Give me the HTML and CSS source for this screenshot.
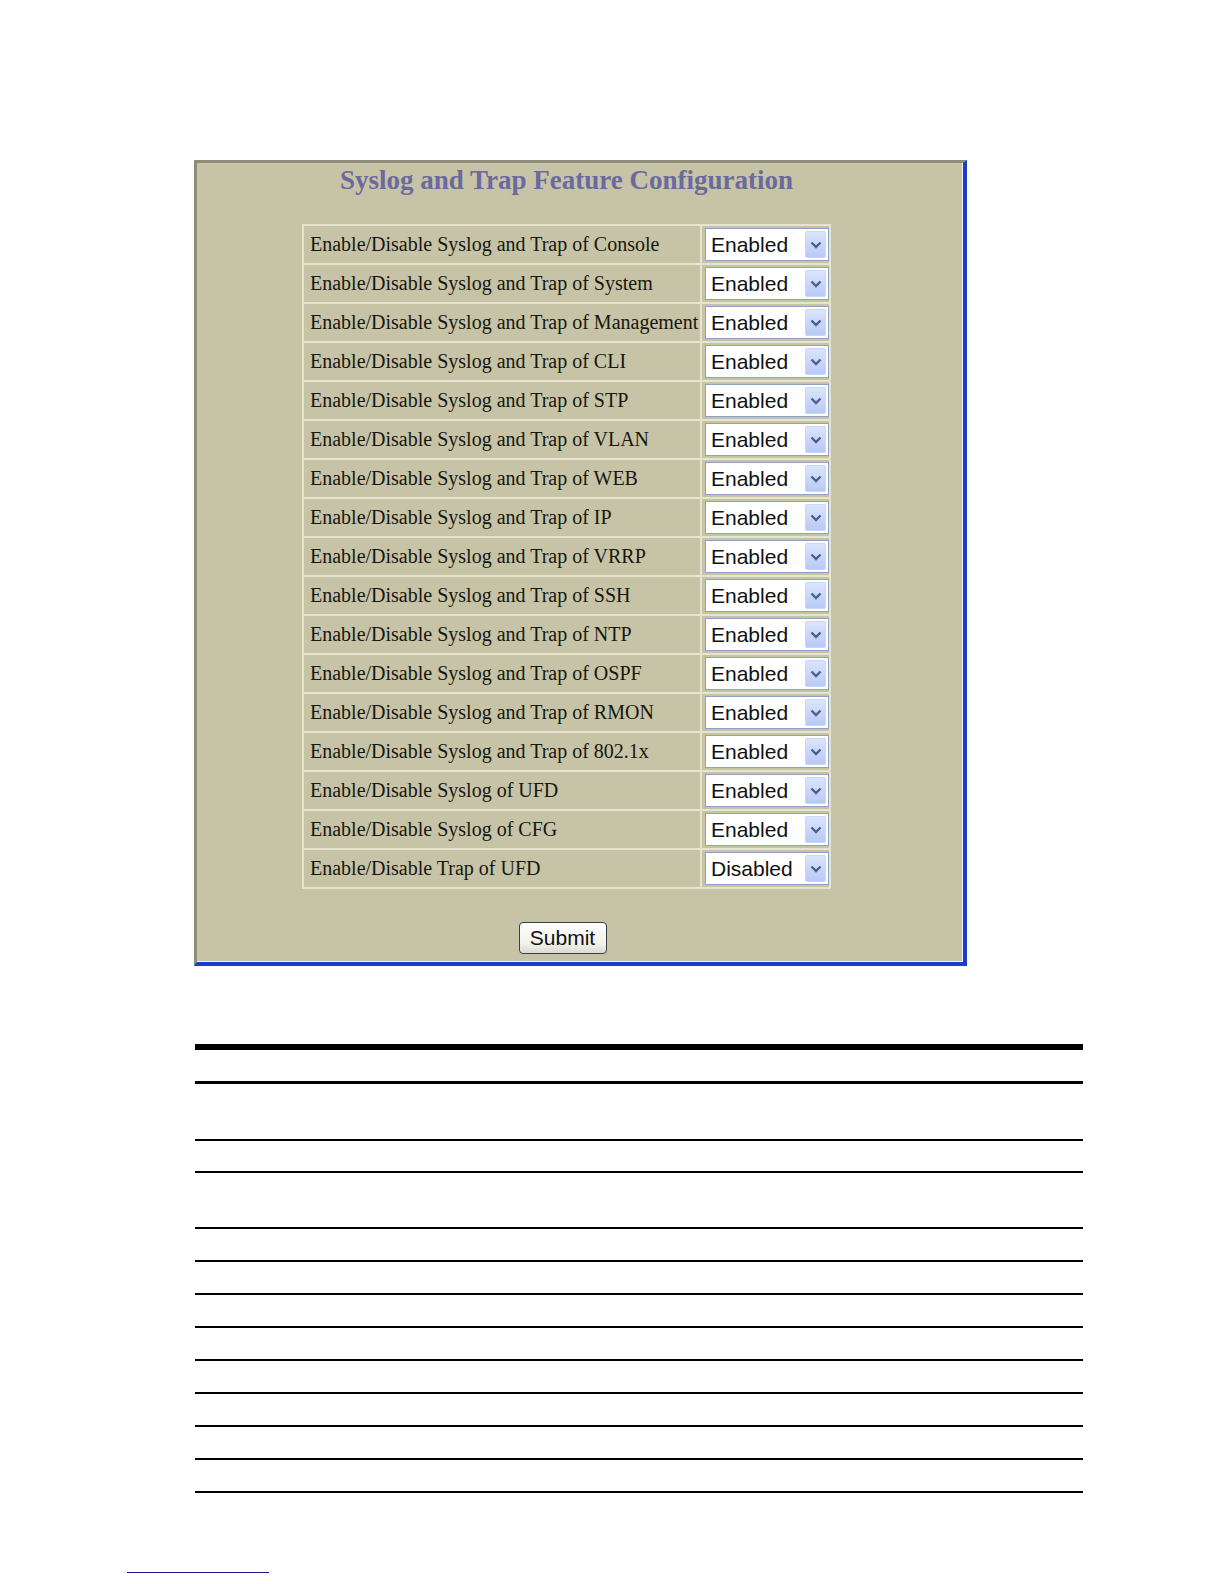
FILE: index.html
```html
<!DOCTYPE html>
<html>
<head>
<meta charset="utf-8">
<title>Syslog and Trap Feature Configuration</title>
<link rel="stylesheet" href="styles.css">
</head>
<body>
<div class="page">
  <div class="panel">
    <div class="panel-inner">
      <h1 class="title">Syslog and Trap Feature Configuration</h1>
      <table class="cfg">
        <tbody>
          <tr><td class="lbl">Enable/Disable Syslog and Trap of Console</td><td class="val"><div class="sel"><span class="sel-text">Enabled</span><span class="sel-btn"><svg viewBox="0 0 12 8" width="12" height="8"><path d="M1.5 1.5 L6 6 L10.5 1.5" fill="none" stroke="#4b5f8c" stroke-width="2.4"/></svg></span></div></td></tr>
          <tr><td class="lbl">Enable/Disable Syslog and Trap of System</td><td class="val"><div class="sel"><span class="sel-text">Enabled</span><span class="sel-btn"><svg viewBox="0 0 12 8" width="12" height="8"><path d="M1.5 1.5 L6 6 L10.5 1.5" fill="none" stroke="#4b5f8c" stroke-width="2.4"/></svg></span></div></td></tr>
          <tr><td class="lbl">Enable/Disable Syslog and Trap of Management</td><td class="val"><div class="sel"><span class="sel-text">Enabled</span><span class="sel-btn"><svg viewBox="0 0 12 8" width="12" height="8"><path d="M1.5 1.5 L6 6 L10.5 1.5" fill="none" stroke="#4b5f8c" stroke-width="2.4"/></svg></span></div></td></tr>
          <tr><td class="lbl">Enable/Disable Syslog and Trap of CLI</td><td class="val"><div class="sel"><span class="sel-text">Enabled</span><span class="sel-btn"><svg viewBox="0 0 12 8" width="12" height="8"><path d="M1.5 1.5 L6 6 L10.5 1.5" fill="none" stroke="#4b5f8c" stroke-width="2.4"/></svg></span></div></td></tr>
          <tr><td class="lbl">Enable/Disable Syslog and Trap of STP</td><td class="val"><div class="sel"><span class="sel-text">Enabled</span><span class="sel-btn"><svg viewBox="0 0 12 8" width="12" height="8"><path d="M1.5 1.5 L6 6 L10.5 1.5" fill="none" stroke="#4b5f8c" stroke-width="2.4"/></svg></span></div></td></tr>
          <tr><td class="lbl">Enable/Disable Syslog and Trap of VLAN</td><td class="val"><div class="sel"><span class="sel-text">Enabled</span><span class="sel-btn"><svg viewBox="0 0 12 8" width="12" height="8"><path d="M1.5 1.5 L6 6 L10.5 1.5" fill="none" stroke="#4b5f8c" stroke-width="2.4"/></svg></span></div></td></tr>
          <tr><td class="lbl">Enable/Disable Syslog and Trap of WEB</td><td class="val"><div class="sel"><span class="sel-text">Enabled</span><span class="sel-btn"><svg viewBox="0 0 12 8" width="12" height="8"><path d="M1.5 1.5 L6 6 L10.5 1.5" fill="none" stroke="#4b5f8c" stroke-width="2.4"/></svg></span></div></td></tr>
          <tr><td class="lbl">Enable/Disable Syslog and Trap of IP</td><td class="val"><div class="sel"><span class="sel-text">Enabled</span><span class="sel-btn"><svg viewBox="0 0 12 8" width="12" height="8"><path d="M1.5 1.5 L6 6 L10.5 1.5" fill="none" stroke="#4b5f8c" stroke-width="2.4"/></svg></span></div></td></tr>
          <tr><td class="lbl">Enable/Disable Syslog and Trap of VRRP</td><td class="val"><div class="sel"><span class="sel-text">Enabled</span><span class="sel-btn"><svg viewBox="0 0 12 8" width="12" height="8"><path d="M1.5 1.5 L6 6 L10.5 1.5" fill="none" stroke="#4b5f8c" stroke-width="2.4"/></svg></span></div></td></tr>
          <tr><td class="lbl">Enable/Disable Syslog and Trap of SSH</td><td class="val"><div class="sel"><span class="sel-text">Enabled</span><span class="sel-btn"><svg viewBox="0 0 12 8" width="12" height="8"><path d="M1.5 1.5 L6 6 L10.5 1.5" fill="none" stroke="#4b5f8c" stroke-width="2.4"/></svg></span></div></td></tr>
          <tr><td class="lbl">Enable/Disable Syslog and Trap of NTP</td><td class="val"><div class="sel"><span class="sel-text">Enabled</span><span class="sel-btn"><svg viewBox="0 0 12 8" width="12" height="8"><path d="M1.5 1.5 L6 6 L10.5 1.5" fill="none" stroke="#4b5f8c" stroke-width="2.4"/></svg></span></div></td></tr>
          <tr><td class="lbl">Enable/Disable Syslog and Trap of OSPF</td><td class="val"><div class="sel"><span class="sel-text">Enabled</span><span class="sel-btn"><svg viewBox="0 0 12 8" width="12" height="8"><path d="M1.5 1.5 L6 6 L10.5 1.5" fill="none" stroke="#4b5f8c" stroke-width="2.4"/></svg></span></div></td></tr>
          <tr><td class="lbl">Enable/Disable Syslog and Trap of RMON</td><td class="val"><div class="sel"><span class="sel-text">Enabled</span><span class="sel-btn"><svg viewBox="0 0 12 8" width="12" height="8"><path d="M1.5 1.5 L6 6 L10.5 1.5" fill="none" stroke="#4b5f8c" stroke-width="2.4"/></svg></span></div></td></tr>
          <tr><td class="lbl">Enable/Disable Syslog and Trap of 802.1x</td><td class="val"><div class="sel"><span class="sel-text">Enabled</span><span class="sel-btn"><svg viewBox="0 0 12 8" width="12" height="8"><path d="M1.5 1.5 L6 6 L10.5 1.5" fill="none" stroke="#4b5f8c" stroke-width="2.4"/></svg></span></div></td></tr>
          <tr><td class="lbl">Enable/Disable Syslog of UFD</td><td class="val"><div class="sel"><span class="sel-text">Enabled</span><span class="sel-btn"><svg viewBox="0 0 12 8" width="12" height="8"><path d="M1.5 1.5 L6 6 L10.5 1.5" fill="none" stroke="#4b5f8c" stroke-width="2.4"/></svg></span></div></td></tr>
          <tr><td class="lbl">Enable/Disable Syslog of CFG</td><td class="val"><div class="sel"><span class="sel-text">Enabled</span><span class="sel-btn"><svg viewBox="0 0 12 8" width="12" height="8"><path d="M1.5 1.5 L6 6 L10.5 1.5" fill="none" stroke="#4b5f8c" stroke-width="2.4"/></svg></span></div></td></tr>
          <tr><td class="lbl">Enable/Disable Trap of UFD</td><td class="val"><div class="sel"><span class="sel-text">Disabled</span><span class="sel-btn"><svg viewBox="0 0 12 8" width="12" height="8"><path d="M1.5 1.5 L6 6 L10.5 1.5" fill="none" stroke="#4b5f8c" stroke-width="2.4"/></svg></span></div></td></tr>
        </tbody>
      </table>
      <div class="actions"><button class="submit" type="button">Submit</button></div>
    </div>
  </div>

  <div class="rules">
    <div class="rule-thick"></div>
    <div class="rule-head"></div>
    <div class="row row-tall"></div>
    <div class="row row-short"></div>
    <div class="row row-tall2"></div>
    <div class="row"></div>
    <div class="row"></div>
    <div class="row"></div>
    <div class="row"></div>
    <div class="row"></div>
    <div class="row"></div>
    <div class="row"></div>
    <div class="row"></div>
  </div>

  <div class="footnote-rule"></div>
</div>
</body>
</html>
```

FILE: styles.css
```css
html, body {
  margin: 0;
  padding: 0;
  background: #ffffff;
}

.page {
  width: 1224px;
  height: 1584px;
  padding-top: 160px;
  box-sizing: border-box;
  overflow: hidden;
}

.panel {
  margin-left: 194px;
  width: 773px;
  height: 806px;
  box-sizing: border-box;
  background: #c6c3a6;
  border-top: 3px solid #8e8d7a;
  border-left: 3px solid #8e8d7a;
  border-right: 4px solid #1b3ccf;
  border-bottom: 4px solid #1b3ccf;
  box-shadow: inset -1px -1px 0 #eef3f0;
}

.panel-inner {
  width: 739px;
  display: flex;
  flex-direction: column;
  align-items: center;
}

.title {
  margin: 2px 0 0 0;
  font-family: "Liberation Serif", "Times New Roman", serif;
  font-weight: bold;
  font-size: 27px;
  line-height: 31px;
  color: #6b6a9e;
}

.cfg {
  margin-top: 28px;
  border-collapse: collapse;
  border: 2px solid #ebe9d6;
}

.cfg td {
  border: 2px solid #e6e4cf;
  padding: 0;
  height: 37px;
}

.lbl {
  width: 390px;
  padding-left: 6px !important;
  font-family: "Liberation Serif", "Times New Roman", serif;
  font-size: 20px;
  color: #17170f;
  white-space: nowrap;
}

.val {
  width: 124px;
  padding-left: 3px !important;
}

.sel {
  width: 124px;
  height: 33px;
  box-sizing: border-box;
  border: 1px solid #8ea3c4;
  background: #ffffff;
  display: flex;
  align-items: center;
  justify-content: space-between;
}

.sel-text {
  padding-left: 5px;
  font-family: "Liberation Sans", Arial, sans-serif;
  font-size: 21px;
  color: #111111;
}

.sel-btn {
  width: 21px;
  height: 27px;
  margin-right: 2px;
  box-sizing: border-box;
  border: 1px solid #c9d6f5;
  border-radius: 2px;
  background: linear-gradient(#dbe5fd, #b7c9f6);
  display: flex;
  align-items: center;
  justify-content: center;
}

.actions {
  margin-top: 33px;
  margin-right: 8px;
}

.submit {
  width: 88px;
  height: 32px;
  border: 1px solid #3a3f47;
  border-radius: 4px;
  background: linear-gradient(#ffffff, #f1f0ea 70%, #dcdad0);
  font-family: "Liberation Sans", Arial, sans-serif;
  font-size: 21px;
  color: #111111;
  padding: 0;
}

.rules {
  margin-left: 195px;
  width: 888px;
  margin-top: 78px;
}

.rule-thick {
  height: 6px;
  background: #000000;
}

.rule-head {
  height: 31px;
  border-bottom: 3px solid #000000;
}

.row {
  height: 31px;
  border-bottom: 2px solid #000000;
}

.row-short {
  height: 30px;
}

.row-tall {
  height: 55px;
}

.row-tall2 {
  height: 54px;
}

.footnote-rule {
  margin-left: 127px;
  margin-top: 79px;
  width: 142px;
  height: 1px;
  background: #1b1b8a;
}
```
